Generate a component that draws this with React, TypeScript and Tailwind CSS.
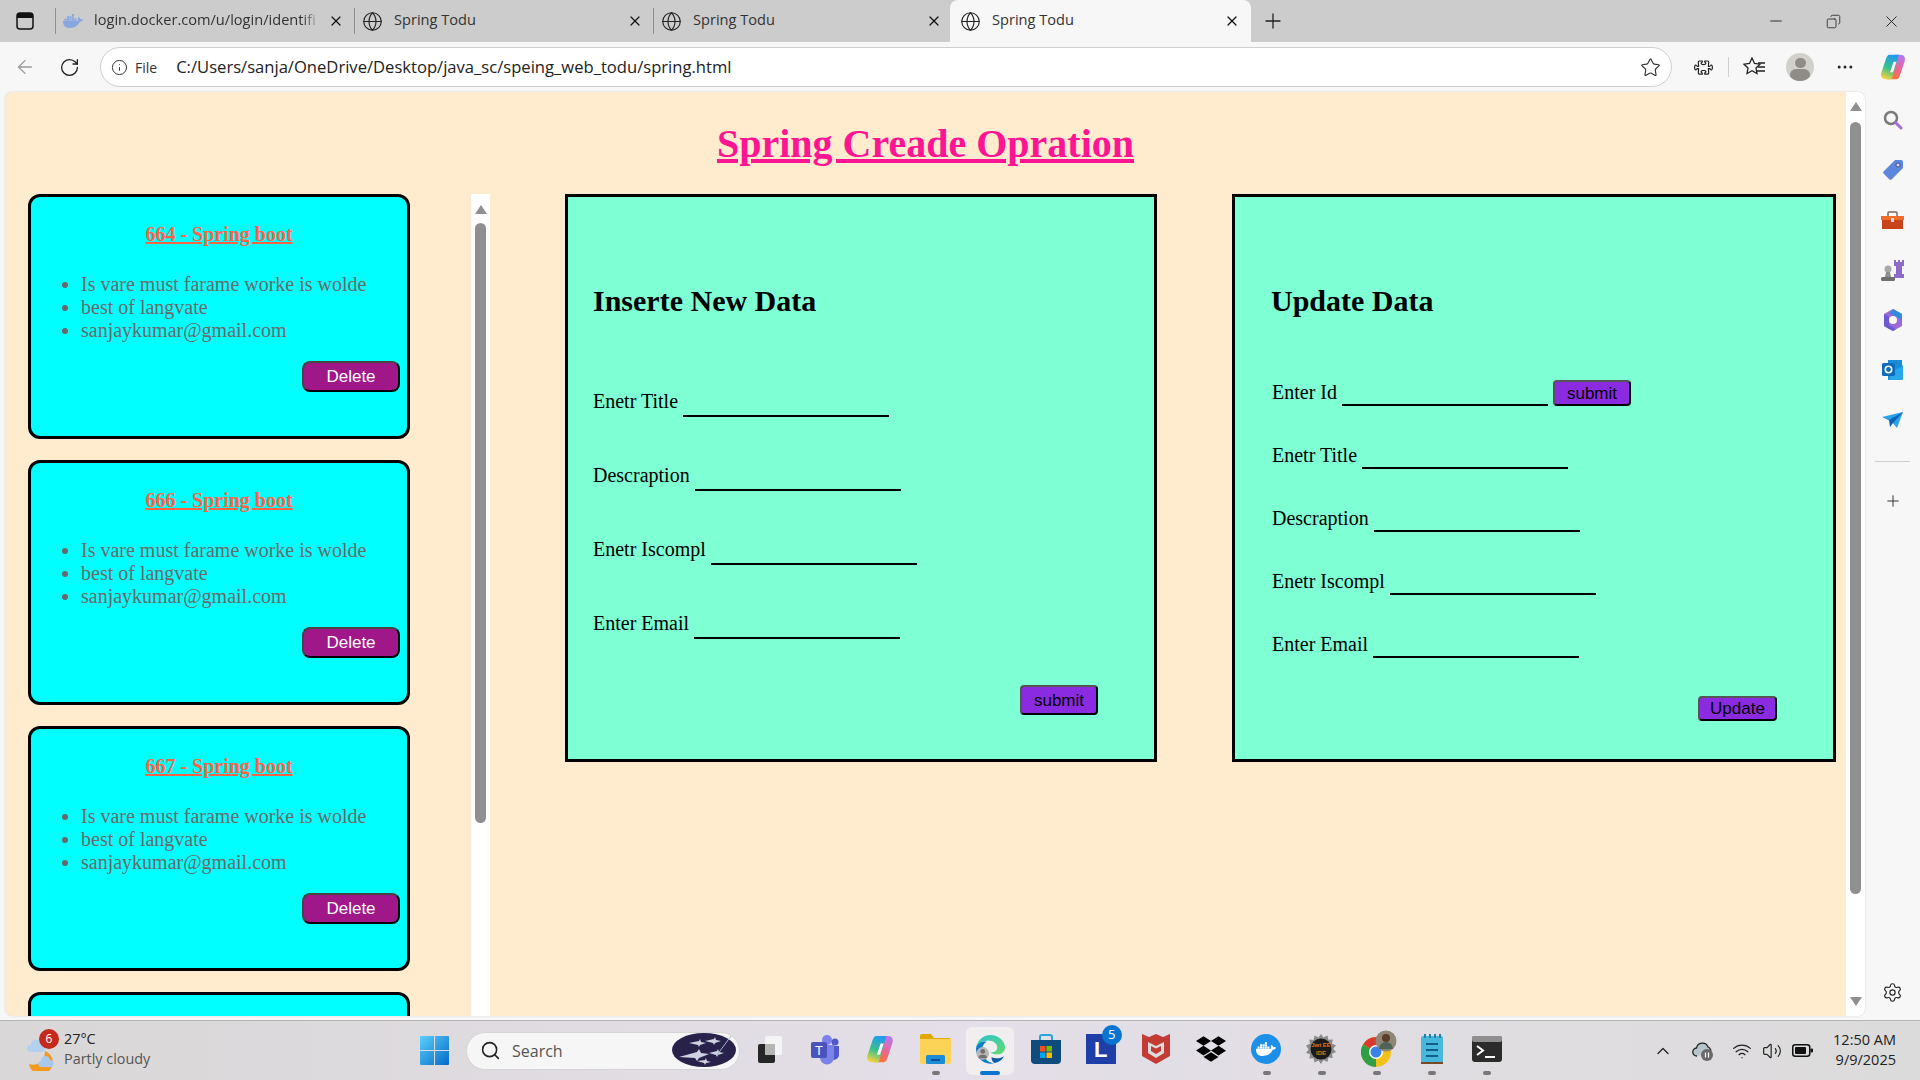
import { ArrowLeft, ChevronUp, Copy, Globe, Info, Minus, MoreHorizontal, Plus, RotateCw, Search, Settings, Star, Volume2, Wifi, X } from 'lucide-react';
import { BsPuzzle } from 'react-icons/bs';
import { FaDocker, FaDropbox } from 'react-icons/fa';

const cards = ['664', '666', '667'];
const sansFont = "font-['Open_Sans',sans-serif]";
const serifFont = "font-['Liberation_Serif',serif]";

const Tab = ({ title, active, docker }: { title: string; active?: boolean; docker?: boolean }) => (
  <div className={`flex h-full items-center ${active ? 'w-[301px] rounded-t-lg bg-[#f7f7f7] pl-[10px] pr-[11px]' : 'w-[299px] border-l border-[#8f8f8f] pl-[7px] pr-[10px] my-[8px] !h-[26px]'}`}>
    {docker ? <FaDocker size={20} className="shrink-0 text-[#86a7e0]" /> : <Globe size={21} strokeWidth={1.3} className="shrink-0 text-[#222]" />}
    <span className={`ml-[11px] flex-1 whitespace-nowrap pb-[2px] text-[14.6px] text-[#333] ${docker ? '[mask-image:linear-gradient(to_right,black_92%,transparent)]' : ''}`}>{title}</span>
    <X size={16} strokeWidth={1.8} className="ml-2 shrink-0 text-[#111]" />
  </div>
);

const Card = ({ id }: { id: string }) => (
  <div className={`h-[245px] w-[382px] shrink-0 rounded-[12px] border-[3px] border-black bg-[#00ffff] pt-[26px] ${serifFont}`}>
    <h3 className="text-center text-[20px] font-bold leading-[22px] text-[#ff6347] underline">{id} - Spring boot</h3>
    <ul className="mt-[28px] list-disc pl-[50px] text-[20px] leading-[23px] text-[#696969]">
      <li>Is vare must farame worke is wolde</li>
      <li>best of langvate</li>
      <li>sanjaykumar@gmail.com</li>
    </ul>
    <div className="mt-[19px] flex justify-end pr-[7px]">
      <button className="h-[31px] w-[98px] rounded-[8px] border-2 border-black border-l-[#444] border-t-[#444] bg-[#a0178a] font-['Liberation_Sans',sans-serif] text-[17px] leading-none text-white">Delete</button>
    </div>
  </div>
);

const Field = ({ label, h, children }: { label: string; h: string; children?: React.ReactNode }) => (
  <div className={`flex items-start gap-[5px] ${h}`}>
    <label className="text-[20px] leading-[23px] text-black">{label}</label>
    <input className="h-full w-[206px] border-b-2 border-black bg-transparent outline-none" />
    {children}
  </div>
);

const FormButton = ({ text, w, h }: { text: string; w: string; h: string }) => (
  <button className={`${w} ${h} rounded-[4px] border-2 border-black border-l-[#555] border-t-[#555] bg-[#8a2be2] font-['Liberation_Sans',sans-serif] text-[17px] leading-none text-black`}>{text}</button>
);

const ArrowUp = () => <div className="h-0 w-0 border-x-[6px] border-b-[9px] border-x-transparent border-b-[#8f8f8f]" />;

const SideIcon = ({ children }: { children: React.ReactNode }) => <div className="flex h-[50px] items-center justify-center">{children}</div>;

const Slot = ({ children, dot, active }: { children: React.ReactNode; dot?: boolean; active?: boolean }) => (
  <div className="relative flex h-[60px] w-[55.2px] shrink-0 items-center justify-center pb-[3px]">
    {active && <div className="absolute left-[3px] top-[6px] h-[48px] w-[48px] rounded-md bg-[#f0eeef]" />}
    <div className="relative">{children}</div>
    {dot && <div className="absolute bottom-[6px] left-[24px] h-[4px] w-[8px] rounded-full bg-[#777]" />}
    {active && <div className="absolute bottom-[6px] left-[17px] h-[4px] w-[20px] rounded-full bg-[#0a74d0]" />}
  </div>
);

const CopilotIcon = ({ size, id }: { size: number; id: string }) => (
  <svg width={size} height={size} viewBox="0 0 24 24">
    <defs>
      <linearGradient id={`${id}a`} x1="0.6" y1="0" x2="0.3" y2="1">
        <stop offset="0" stopColor="#1f9cf0" />
        <stop offset="0.55" stopColor="#3ac08a" />
        <stop offset="1" stopColor="#f5d33e" />
      </linearGradient>
      <linearGradient id={`${id}b`} x1="0.7" y1="0" x2="0.3" y2="1">
        <stop offset="0" stopColor="#b678ef" />
        <stop offset="0.55" stopColor="#f0648f" />
        <stop offset="1" stopColor="#f7762e" />
      </linearGradient>
    </defs>
    <path d="M15 22.500H7l6-21h5.500c3 0 4.500 2.500 3.500 5.500l-4 12c-.6 2-1.600 3.500-3 3.500z" fill={`url(#${id}b)`} />
    <path d="M9 1.500h8l-6 21H5.500C2.500 22.500 1 20 2 17L6 5c.6-2 1.600-3.500 3-3.500z" fill={`url(#${id}a)`} />
    <path d="M12.500 7.500h2.500L12 16.500H9.500z" fill="#fff" opacity="0.95" />
  </svg>
);

const WindowsLogo = () => (
  <svg width="29" height="29" viewBox="0 0 29 29">
    <defs>
      <linearGradient id="win" x1="0" y1="0" x2="1" y2="1">
        <stop offset="0" stopColor="#5ad0fb" />
        <stop offset="1" stopColor="#0569c8" />
      </linearGradient>
    </defs>
    <path d="M1 0h13v14H0V1a1 1 0 0 1 1-1zM15 0h13a1 1 0 0 1 1 1v13H15zM0 15h14v14H1a1 1 0 0 1-1-1zM15 15h14v13a1 1 0 0 1-1 1H15z" fill="url(#win)" />
  </svg>
);

const TeamsIcon = () => (
  <svg width="32" height="32" viewBox="0 0 32 32">
    <circle cx="18" cy="7" r="5" fill="#7b83eb" />
    <circle cx="26" cy="9" r="3.500" fill="#5059c9" />
    <path d="M21 13h9v9a5 5 0 0 1-7 4.500z" fill="#5059c9" />
    <path d="M10 12h15v12a7 7 0 0 1-14 1z" fill="#7b83eb" />
    <rect x="2" y="9" width="16" height="16" rx="2" fill="#4b53bc" />
    <text x="10" y="22" textAnchor="middle" fontSize="13" fontFamily="Liberation Sans" fill="#fff">T</text>
  </svg>
);

const ExplorerIcon = () => (
  <svg width="31" height="30" viewBox="0 0 31 30">
    <path d="M0 2a2 2 0 0 1 2-2h9l3 4h15a2 2 0 0 1 2 2v4H0z" fill="#e0a800" />
    <path d="M0 5h31v23a2 2 0 0 1-2 2H2a2 2 0 0 1-2-2z" fill="#fcd357" />
    <rect x="6" y="21" width="19" height="9" rx="1.500" fill="#1d8cd6" />
    <rect x="11" y="25" width="9" height="2" fill="#0b4f94" />
  </svg>
);

const EdgeIcon = () => (
  <svg width="31" height="31" viewBox="0 0 32 32">
    <defs>
      <linearGradient id="edg" x1="0" y1="0" x2="1" y2="1">
        <stop offset="0" stopColor="#2cc2d5" />
        <stop offset="1" stopColor="#5fdc6a" />
      </linearGradient>
    </defs>
    <path d="M16 1c8 0 15 6 15 13 0 5-4 7-8 7-3 0-6-1-7-2 5 0 7-2 7-5 0-5-6-8-11-7C6 8 2 11 1 15 2 7 8 1 16 1z" fill="url(#edg)" />
    <path d="M1 15c1-5 6-8 11-7-5 3-6 9-3 15 2 4 6 7 11 7-10 3-19-5-19-15z" fill="#0c7fcb" />
    <path d="M20 30c4-.5 8-3 10-7-3 2-8 3-13 1 0 2 1 5 3 6z" fill="#0a5da8" />
    <circle cx="8" cy="20" r="6.500" fill="#b8b8b8" />
    <circle cx="8" cy="18" r="2.500" fill="#707070" />
    <path d="M3.500 25a4.500 3.500 0 0 1 9 0z" fill="#707070" />
  </svg>
);

const StoreIcon = () => (
  <svg width="30" height="30" viewBox="0 0 30 30">
    <path d="M9 6V3a2 2 0 0 1 2-2h8a2 2 0 0 1 2 2v3" stroke="#25a7d8" strokeWidth="2" fill="none" />
    <path d="M0 6h30v20a4 4 0 0 1-4 4H4a4 4 0 0 1-4-4z" fill="#0f4c7d" />
    <rect x="9" y="12" width="5.500" height="5.500" fill="#f25022" />
    <rect x="15.500" y="12" width="5.500" height="5.500" fill="#7fba00" />
    <rect x="9" y="18.500" width="5.500" height="5.500" fill="#00a4ef" />
    <rect x="15.500" y="18.500" width="5.500" height="5.500" fill="#ffb900" />
  </svg>
);

const McAfeeIcon = () => (
  <svg width="28" height="30" viewBox="0 0 28 30">
    <path d="M0 0l7 3 7-3 7 3 7-3v22l-14 8-14-8z" fill="#c23b35" />
    <path d="M6 8l8 4 8-4v11l-8 5-8-5z" fill="#dedcdc" />
    <path d="M9 12l5 2.500 5-2.500v5l-5 3-5-3z" fill="#c23b35" />
  </svg>
);

const GearBadge = () => (
  <svg width="30" height="30" viewBox="0 0 30 30">
    <path d="M15 0l2.500 3.500 4-2 .9 4.300 4.300-.4-.7 4.300 4 1.600-2.700 3.400 2.700 3.400-4 1.600.7 4.300-4.300-.4-.9 4.300-4-2L15 30l-2.500-3.500-4 2-.9-4.300-4.300.4.700-4.300-4-1.600 2.700-3.400L0 11.400l4-1.600-.7-4.300 4.300.4.900-4.300 4 2z" fill="#8a8a8a" />
    <circle cx="15" cy="15" r="10.500" fill="#1b1b1b" />
    <text x="15" y="13" textAnchor="middle" fontSize="6" fontWeight="700" fontFamily="Liberation Sans" fill="#d9770f">Jwt EE</text>
    <text x="15" y="21" textAnchor="middle" fontSize="6" fontWeight="700" fontFamily="Liberation Sans" fill="#d9770f">IDE</text>
  </svg>
);

const ChromeIcon = () => (
  <svg width="37" height="38" viewBox="0 0 37 38" className="ml-[5px]">
    <g transform="translate(0 7)">
      <circle cx="15" cy="15" r="15" fill="#f3c21a" />
      <path d="M15 15L2 7.500A15 15 0 0 1 28 7.500H15z" fill="#d93a2f" />
      <path d="M15 15L2 7.500A15 15 0 0 0 15 30z" fill="#2f9e44" />
      <circle cx="15" cy="15" r="7" fill="#fff" />
      <circle cx="15" cy="15" r="5.500" fill="#3b82e8" />
    </g>
    <circle cx="25" cy="11" r="10.500" fill="#8f8776" />
    <circle cx="25" cy="8" r="4" fill="#5a3d28" />
    <path d="M18 19a7 7 0 0 1 14 0z" fill="#4f6358" />
  </svg>
);

const NotepadIcon = () => (
  <svg width="24" height="32" viewBox="0 0 24 32">
    <rect x="1" y="3" width="22" height="27" rx="2" fill="#47b8db" />
    <rect x="1" y="29" width="22" height="2" fill="#7a4a24" />
    <path d="M5 1v4M10 1v4M15 1v4M20 1v4" stroke="#1e7fa8" strokeWidth="2" />
    <path d="M6 11h12M6 17h12M6 23h12" stroke="#0f5f88" strokeWidth="2" />
  </svg>
);

const TerminalIcon = () => (
  <svg width="30" height="26" viewBox="0 0 30 26">
    <rect width="30" height="26" rx="3" fill="#2b2b2b" />
    <rect width="30" height="6" rx="2" fill="#8f8f8f" />
    <path d="M5 10l6 4.500-6 4.500" stroke="#fff" strokeWidth="2" fill="none" />
    <path d="M13 21h10" stroke="#fff" strokeWidth="2" />
  </svg>
);

const WeatherIcon = () => (
  <svg width="30" height="40" viewBox="0 0 30 40">
    <path d="M6 14a5 5 0 0 1 10-1 4 4 0 0 1 0 8H5a3.500 3.500 0 0 1 1-7z" fill="#b4d0ee" />
    <path d="M20 20a12 12 0 1 1-16 13c8 3 16-3 16-13z" fill="#f29a1f" />
    <path d="M16 30a4.500 4.500 0 0 1 9-1 3.500 3.500 0 0 1 0 7H15a3.200 3.200 0 0 1 1-6z" fill="#a9c9ec" />
  </svg>
);

const SearchThumb = () => (
  <svg width="66" height="35" viewBox="0 0 66 35">
    <ellipse cx="33" cy="17" rx="32" ry="17" fill="#28224a" />
    <g fill="#cfd2e2">
      <path d="M8 24l18-5 2-3 2 4 8 1-10 4-2 3-2-3z" />
      <path d="M18 10l10-2 1-2 1 3 5 1-6 2-1 2-1-2z" />
      <path d="M34 8l9-2 1-2 1 3 5 1-6 2-1 2-1-2z" />
      <path d="M38 20l8-2 1-2 1 3 5 1-6 2-1 2-1-2z" />
      <path d="M26 28l8-1 1-2 1 3 4 1-5 1-1 2-1-2z" />
    </g>
    <path d="M46 22L60 3" stroke="#9fb8dc" strokeWidth="1" />
  </svg>
);

const SearchPill = () => (
  <div className="flex h-[38px] w-[274px] shrink-0 items-center rounded-full border border-[#d5d5d5] bg-[#f6f6f6] pl-[13px] pr-[2px]">
    <Search size={21} strokeWidth={1.8} className="text-[#222]" />
    <span className="ml-[11px] flex-1 text-[16px] text-[#555]">Search</span>
    <SearchThumb />
  </div>
);

const CloudTray = () => (
  <svg width="22" height="20" viewBox="0 0 22 20">
    <path d="M5 15a4 4 0 0 1-.5-8A6 6 0 0 1 16 6a4 4 0 0 1 2 6" fill="#b8c4cc" stroke="#222" strokeWidth="1.300" />
    <circle cx="15" cy="14" r="6" fill="#6a6a6a" />
    <path d="M13.500 11.500v5M16.500 11.500v5" stroke="#fff" strokeWidth="1.200" />
  </svg>
);

const BatteryTray = () => (
  <svg width="21" height="13" viewBox="0 0 21 13">
    <rect x="0.750" y="0.750" width="17" height="11.500" rx="2.500" fill="none" stroke="#111" strokeWidth="1.500" />
    <rect x="3" y="3" width="11" height="7" rx="1" fill="#111" />
    <rect x="18.500" y="4.500" width="2.500" height="4" rx="1" fill="#111" />
  </svg>
);

const TagIcon = () => (
  <svg width="20" height="20" viewBox="0 0 20 20">
    <path d="M12 0h6a2 2 0 0 1 2 2v6L9 19a2 2 0 0 1-3 0l-5-5a2 2 0 0 1 0-3z" fill="#5b86dc" />
    <circle cx="15" cy="5" r="2" fill="#d8dcf4" stroke="#333a70" strokeWidth="0.800" />
  </svg>
);

const ToolsIcon = () => (
  <svg width="23" height="18" viewBox="0 0 23 18">
    <path d="M7 5V2a1 1 0 0 1 1-1h7a1 1 0 0 1 1 1v3" fill="none" stroke="#7a6a62" strokeWidth="1.500" />
    <path d="M0 5h23v4H0z" fill="#ef6a2b" />
    <path d="M1 9h21v9H1z" fill="#c8431a" />
    <rect x="10" y="7" width="3" height="4" fill="#d8d8d8" />
  </svg>
);

const GamesIcon = () => (
  <svg width="23" height="23" viewBox="0 0 23 23">
    <path d="M13 1h2v2h2V1h2v2h2V1h2v6h-2v8h2v4H13v-4h2V7h-2z" fill="#8c6cc8" />
    <circle cx="7" cy="10" r="3.500" fill="#a8a8a8" />
    <path d="M5 13h4l1 5H4z" fill="#8f8f8f" />
    <rect x="0" y="18" width="14" height="4" rx="1.500" fill="#6f6f6f" />
  </svg>
);

const M365Icon = () => (
  <svg width="20" height="22" viewBox="0 0 20 22">
    <path d="M10 0l9 5v12l-9 5-9-5V5z" fill="#9a6ad8" />
    <path d="M10 0l9 5v6l-5-3-4-2-3-2z" fill="#2f8be0" />
    <path d="M1 5v12l5 3 4 2 3-2-7-4V8z" fill="#6a5bd0" />
    <circle cx="10" cy="11" r="4" fill="#f7f7f7" />
  </svg>
);

const OutlookIcon = () => (
  <svg width="21" height="20" viewBox="0 0 21 20">
    <path d="M6 0h14v4l1 3v11a2 2 0 0 1-2 2H6z" fill="#1a8cd8" />
    <path d="M10 11l11-5v12a2 2 0 0 1-2 2H7z" fill="#28a8ea" />
    <rect x="0" y="3" width="13" height="13" rx="1.500" fill="#0f6cbd" />
    <circle cx="6.500" cy="9.500" r="3.200" fill="none" stroke="#fff" strokeWidth="1.500" />
  </svg>
);

const SendIcon = () => (
  <svg width="21" height="16" viewBox="0 0 21 16">
    <path d="M0 5l21-5-6 16-5-6z" fill="#29a3e8" />
    <path d="M21 0L7 8l1 7 3-4z" fill="#0f5fb8" />
  </svg>
);

const AppLogo = () => (
  <div className="relative flex h-[30px] w-[30px] items-center justify-center bg-[#1f3fa8]">
    <span className="font-['Liberation_Sans',sans-serif] text-[22px] font-bold text-white">L</span>
    <div className="absolute -right-[6px] -top-[9px] flex h-[20px] w-[20px] items-center justify-center rounded-full bg-[#0a74d0] text-[13px] text-white">5</div>
  </div>
);

const App = () => {
  return (
    <div className={`flex h-screen flex-col overflow-hidden bg-[#f7f7f7] ${sansFont}`}>
      {/* tab strip */}
      <div className="flex h-[42px] shrink-0 items-center bg-[#cccccc]">
        <div className="flex w-[55px] items-center justify-center pr-[5px]">
          <svg width="18" height="18" viewBox="0 0 18 18">
            <rect x="1" y="1" width="16" height="16" rx="3" fill="none" stroke="#111" strokeWidth="1.500" />
            <path d="M1 4a3 3 0 0 1 3-3h10a3 3 0 0 1 3 3v2H1z" fill="#111" />
          </svg>
        </div>
        <Tab title="login.docker.com/u/login/identifi" docker />
        <Tab title="Spring Todu" />
        <div className="h-full w-[297px]">
          <Tab title="Spring Todu" />
        </div>
        <Tab title="Spring Todu" active />
        <Plus size={24} strokeWidth={1.3} className="ml-[10px] text-[#222]" />
        <div className="flex-1" />
        <div className="flex items-center gap-[41px] pr-[19px] text-[#222]">
          <Minus size={18} strokeWidth={1.2} />
          <Copy size={15} strokeWidth={1.3} className="-scale-x-100" />
          <X size={19} strokeWidth={1.2} />
        </div>
      </div>

      {/* toolbar */}
      <div className="flex h-[50px] shrink-0 items-center bg-[#f7f7f7]">
        <ArrowLeft size={22} strokeWidth={1.4} className="ml-[14px] text-[#9a9a9a]" />
        <RotateCw size={21} strokeWidth={1.5} className="ml-[23px] text-[#222]" />
        <div className="ml-[20px] flex h-[40px] w-[1572px] items-center rounded-full border border-[#cfcfcf] bg-white pl-[10px] pr-[10px]">
          <Info size={17} strokeWidth={1.4} className="text-[#333]" />
          <span className="ml-[7px] text-[14px] text-[#333]">File</span>
          <span className="ml-[19px] flex-1 text-[16.6px] text-[#222]">C:/Users/sanja/OneDrive/Desktop/java_sc/speing_web_todu/spring.html</span>
          <Star size={21} strokeWidth={1.3} className="text-[#333]" />
        </div>
        <BsPuzzle size={19} className="ml-[22px] text-[#222]" />
        <div className="ml-[15px] h-[20px] w-px bg-[#cfcfcf]" />
        <svg width="22" height="20" viewBox="0 0 22 20" className="ml-[14px]">
          <path d="M9 1l2.500 5.500 5.500.7-4 3.800 1 5.500L9 13.800 4 16.500l1-5.500-4-3.800 5.500-.7z" fill="none" stroke="#222" strokeWidth="1.300" />
          <path d="M15 6h7M15 10h7M14 14h8" stroke="#222" strokeWidth="1.300" />
        </svg>
        <div className="ml-[21px] flex h-[28px] w-[28px] flex-col items-center overflow-hidden rounded-full bg-[#d2d0cc]">
          <div className="mt-[5px] h-[12px] w-[11px] rounded-full bg-[#8f8b85]" />
          <div className="mt-[1px] h-[14px] w-[20px] rounded-full bg-[#8f8b85]" />
        </div>
        <MoreHorizontal size={20} strokeWidth={1.6} className="ml-[21px] text-[#222]" />
        <div className="ml-[24px]"><CopilotIcon size={28} id="cp1" /></div>
      </div>

      {/* browser body */}
      <div className="flex min-h-0 flex-1">
        <div className="ml-[5px] flex h-[924px] w-[1860px] shrink-0 overflow-hidden rounded-lg bg-[#ffebcd] shadow-[0_0_2px_#cfcfcf]">
          <div className={`flex min-w-0 flex-1 flex-col ${serifFont}`}>
            <h1 className="h-[102px] pt-[28px] text-center text-[40px] font-bold leading-[48px] text-[#ff1493] underline">Spring Creade Opration</h1>
            <div className="flex min-h-0 flex-1 pl-[23px] pr-[10px]">
              <div className="flex w-[462px] shrink-0 justify-between overflow-hidden">
                <div className="flex flex-col gap-[21px]">
                  {cards.map((id) => <Card key={id} id={id} />)}
                  <div className="h-[245px] w-[382px] shrink-0 rounded-[12px] border-[3px] border-black bg-[#00ffff]" />
                </div>
                <div className="flex w-[19px] shrink-0 flex-col items-center bg-white">
                  <div className="mt-[11px]"><ArrowUp /></div>
                  <div className="mt-[9px] h-[600px] w-[11px] rounded-full bg-[#8f8f8f]" />
                </div>
              </div>

              <div className="ml-[75px] h-[568px] w-[592px] shrink-0 border-[3px] border-black bg-[#7fffd4] pl-[25px] pt-[88px]">
                <h2 className="text-[30px] font-bold leading-[32px] text-black">Inserte New Data</h2>
                <div className="mt-[73px] flex flex-col gap-[47px]">
                  <Field label="Enetr Title" h="h-[27px]" />
                  <Field label="Descraption" h="h-[27px]" />
                  <Field label="Enetr Iscompl" h="h-[27px]" />
                  <Field label="Enter Email" h="h-[27px]" />
                </div>
                <div className="mt-[46px] flex justify-end pr-[56px]">
                  <FormButton text="submit" w="w-[78px]" h="h-[30px]" />
                </div>
              </div>

              <div className="ml-[75px] h-[568px] w-[604px] shrink-0 border-[3px] border-black bg-[#7fffd4] pl-[36px] pt-[88px]">
                <h2 className="text-[30px] font-bold leading-[32px] text-black">Update Data</h2>
                <div className="ml-[1px] mt-[64px] flex flex-col gap-[38px]">
                  <Field label="Enter Id" h="h-[25px]">
                    <FormButton text="submit" w="w-[78px]" h="h-[26px] -mt-[1px]" />
                  </Field>
                  <Field label="Enetr Title" h="h-[25px]" />
                  <Field label="Descraption" h="h-[25px]" />
                  <Field label="Enetr Iscompl" h="h-[25px]" />
                  <Field label="Enter Email" h="h-[25px]" />
                </div>
                <div className="mt-[38px] flex justify-end pr-[56px]">
                  <FormButton text="Update" w="w-[79px]" h="h-[25px]" />
                </div>
              </div>
            </div>
          </div>
          <div className="flex w-[19px] shrink-0 flex-col items-center bg-white">
            <div className="mt-[10px]"><ArrowUp /></div>
            <div className="mt-[11px] h-[772px] w-[11px] rounded-full bg-[#8f8f8f]" />
            <div className="flex-1" />
            <div className="mb-[10px] h-0 w-0 border-x-[6px] border-t-[9px] border-x-transparent border-t-[#8f8f8f]" />
          </div>
        </div>

        {/* edge sidebar */}
        <div className="flex flex-1 flex-col items-center pt-[3px]">
          <SideIcon>
            <svg width="20" height="20" viewBox="0 0 20 20">
              <circle cx="8" cy="8" r="6" fill="none" stroke="#7a7a7a" strokeWidth="2.500" />
              <path d="M12.500 12.500L18 18" stroke="#a070d8" strokeWidth="3" strokeLinecap="round" />
            </svg>
          </SideIcon>
          <SideIcon><TagIcon /></SideIcon>
          <SideIcon><ToolsIcon /></SideIcon>
          <SideIcon><GamesIcon /></SideIcon>
          <SideIcon><M365Icon /></SideIcon>
          <SideIcon><OutlookIcon /></SideIcon>
          <SideIcon><SendIcon /></SideIcon>
          <div className="mt-[16px] h-px w-[35px] bg-[#cfcfcf]" />
          <div className="mt-[30px]"><Plus size={18} strokeWidth={1.2} className="text-[#222]" /></div>
          <div className="flex-1" />
          <Settings size={21} strokeWidth={1.3} className="mb-[17px] text-[#222]" />
        </div>
      </div>

      {/* taskbar */}
      <div className="h-[60px] shrink-0 border-t border-[#b5b5b5] bg-gradient-to-r from-[#d9d7d7] via-[#e4dfe8] to-[#dcdbdb]">
        <div className="flex h-full items-center">
          <div className="flex w-[420px] shrink-0 items-center pl-[25px]">
            <div className="relative">
              <WeatherIcon />
              <div className="absolute left-[14px] top-[-2px] flex h-[20px] w-[20px] items-center justify-center rounded-full bg-[#c42b1c] text-[12px] text-white">6</div>
            </div>
            <div className="mb-[3px] ml-[9px] text-[14.4px] leading-[20px]">
              <div className="text-[#222]">27°C</div>
              <div className="text-[#555]">Partly cloudy</div>
            </div>
          </div>
          <WindowsLogo />
          <div className="ml-[17px]"><SearchPill /></div>
          <div className="ml-[2px] flex">
            <Slot>
              <svg width="24" height="27" viewBox="0 0 24 27">
                <rect x="7" y="0" width="17" height="19" rx="2" fill="#f4f4f4" />
                <rect x="0" y="8" width="17" height="19" rx="2" fill="#262626" />
                <rect x="7" y="8" width="10" height="11" fill="#b5b5b5" />
              </svg>
            </Slot>
            <Slot><TeamsIcon /></Slot>
            <Slot><CopilotIcon size={30} id="cp2" /></Slot>
            <Slot dot><ExplorerIcon /></Slot>
            <Slot active><EdgeIcon /></Slot>
            <Slot><StoreIcon /></Slot>
            <Slot><AppLogo /></Slot>
            <Slot><McAfeeIcon /></Slot>
            <Slot><FaDropbox size={30} className="text-black" /></Slot>
            <Slot dot>
              <div className="flex h-[30px] w-[30px] items-center justify-center rounded-full bg-[#1d8fe8]">
                <FaDocker size={20} className="text-white" />
              </div>
            </Slot>
            <Slot dot><GearBadge /></Slot>
            <Slot dot><ChromeIcon /></Slot>
            <Slot dot><NotepadIcon /></Slot>
            <Slot dot><TerminalIcon /></Slot>
          </div>
          <div className="flex-1" />
          <div className="flex items-center pr-[24px] text-[#222]">
            <ChevronUp size={20} strokeWidth={1.5} />
            <div className="ml-[19px]"><CloudTray /></div>
            <Wifi size={20} strokeWidth={1.5} className="ml-[18px]" />
            <Volume2 size={20} strokeWidth={1.4} className="ml-[10px]" />
            <div className="ml-[10px]"><BatteryTray /></div>
            <div className="mb-[2px] ml-[20px] text-right text-[14.5px] leading-[20px] text-[#222]">
              <div>12:50 AM</div>
              <div>9/9/2025</div>
            </div>
          </div>
        </div>
      </div>
    </div>
  );
};

export default App;
